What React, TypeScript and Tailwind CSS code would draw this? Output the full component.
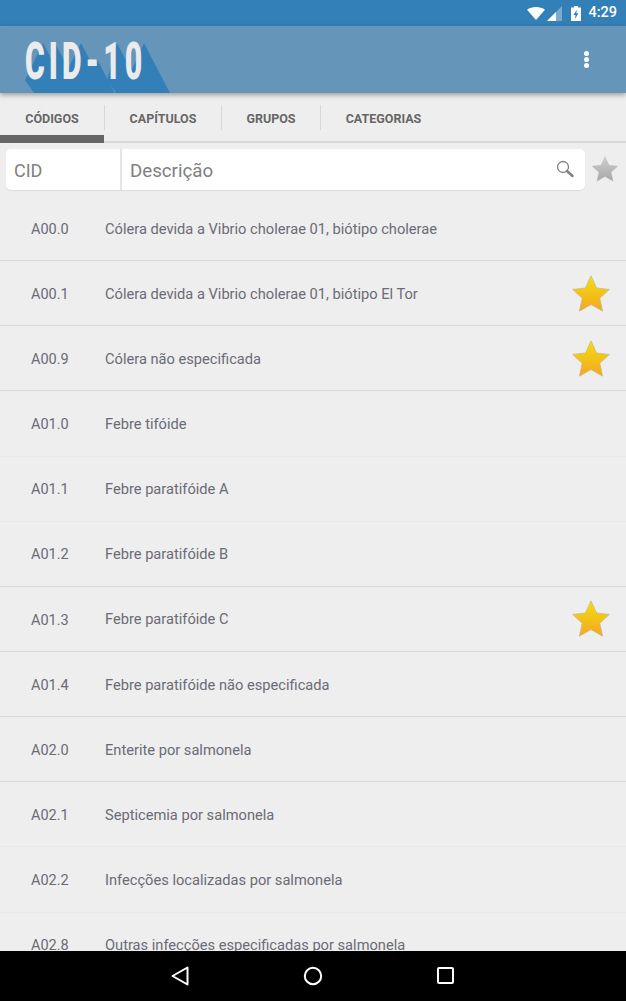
import { useId } from "react";

const rows = [
  { code: "A00.0", text: "Cólera devida a Vibrio cholerae 01, biótipo cholerae", line: "strong" },
  { code: "A00.1", text: "Cólera devida a Vibrio cholerae 01, biótipo El Tor", line: "strong", fav: true },
  { code: "A00.9", text: "Cólera não especificada", line: "strong", fav: true },
  { code: "A01.0", text: "Febre tifóide", line: "faint" },
  { code: "A01.1", text: "Febre paratifóide A", line: "faint" },
  { code: "A01.2", text: "Febre paratifóide B", line: "strong" },
  { code: "A01.3", text: "Febre paratifóide C", line: "strong", fav: true },
  { code: "A01.4", text: "Febre paratifóide não especificada", line: "strong" },
  { code: "A02.0", text: "Enterite por salmonela", line: "strong" },
  { code: "A02.1", text: "Septicemia por salmonela", line: "faint" },
  { code: "A02.2", text: "Infecções localizadas por salmonela", line: "faint" },
  { code: "A02.8", text: "Outras infecções especificadas por salmonela", line: "faint" },
];

const tabs = [
  { label: "CÓDIGOS", width: "w-[105px]", active: true },
  { label: "CAPÍTULOS", width: "w-[117px]" },
  { label: "GRUPOS", width: "w-[99px]" },
  { label: "CATEGORIAS", width: "w-[125px]", last: true },
];

// bounding boxes of the logo glyphs, used for the long shadow
const logoShadow = [
  [25, 43, 43, 80],
  [48, 43, 55, 80],
  [62, 43, 81, 80],
  [86, 59, 97, 63],
  [107, 43, 117, 80],
  [127, 43, 144, 80],
];

function Star({ from, to, stroke, className }: { from: string; to: string; stroke: string; className: string }) {
  const id = useId();
  return (
    <svg viewBox="0 0 38 37" className={className}>
      <defs>
        <linearGradient id={id} x1="0" y1="0" x2="0" y2="1">
          <stop offset="0.1" stopColor={from} />
          <stop offset="1" stopColor={to} />
        </linearGradient>
      </defs>
      <path
        d="M19 .8 24.6 13 37.4 14.4 27.8 23.2 30.6 36.2 19 29.6 7.4 36.2 10.2 23.2.6 14.4 13.4 13Z"
        fill={`url(#${id})`}
        stroke={stroke}
        strokeWidth="0.7"
        strokeLinejoin="round"
      />
    </svg>
  );
}

function StatusBar() {
  return (
    <div className="h-[26px] bg-[#3380b8] flex items-center justify-end text-white">
      <svg viewBox="0 0 18 13" className="w-[18px] h-[13px] mr-[2px]">
        <path d="M0 2.8C2.4.9 5.6 0 9 0s6.600.9 9 2.800L9 13Z" fill="#fff" />
      </svg>
      <svg viewBox="0 0 15 15" className="w-[15px] h-[15px] mr-[9px]">
        <path d="M15 0V15H0Z" fill="#fff" fillOpacity="0.35" />
        <path d="M9 6V15H0Z" fill="#fff" />
      </svg>
      <svg viewBox="0 0 10 15" className="w-[10px] h-[15px] mr-[7px]">
        <path
          d="M3 0H7V1.500H10V15H0V1.500H3ZM6 3.500 2.500 9H4.500L4 13 7.500 7.300H5.300Z"
          fill="#fff"
          fillRule="evenodd"
        />
      </svg>
      <span className="font-['Roboto',sans-serif] text-[14.500px] font-medium mr-[9px] leading-none">4:29</span>
    </div>
  );
}

function AppBar() {
  return (
    <div className="relative z-10 h-[67px] bg-[#6596ba] shadow-[0_2px_5px_rgba(0,0,0,0.35)] flex items-center justify-between overflow-hidden">
      <svg viewBox="0 0 200 67" className="absolute left-0 top-0 w-[200px] h-[67px]">
        {logoShadow.map(([x0, y0, x1, y1], i) => (
          <polygon
            key={i}
            fill="#3380b8"
            points={`${x0},${y1 - 26} ${x1},${y0 - 26} ${x1 + (93 - y0) * 0.52},67 ${x0 + (93 - y1) * 0.7},67`}
          />
        ))}
      </svg>
      <span className="relative ml-[25px] mt-[4px] font-['Roboto',sans-serif] font-black text-[52px] leading-none tracking-[7px] text-[#ebebeb] origin-left scale-x-[0.58]">
        CID-10
      </span>
      <div className="flex flex-col gap-[1px] mr-[37px]">
        <span className="w-[5px] h-[5px] rounded-full bg-white" />
        <span className="w-[5px] h-[5px] rounded-full bg-white" />
        <span className="w-[5px] h-[5px] rounded-full bg-white" />
      </div>
    </div>
  );
}

function Tabs() {
  return (
    <div className="h-[50px] flex border-b-2 border-[#d8d8d8] font-['Roboto',sans-serif]">
      {tabs.map((t) => (
        <div key={t.label} className={`${t.width} relative h-[50px] flex items-start`}>
          <div className={`w-full h-[25px] mt-[12px] pt-[3px] flex items-center justify-center text-[12.500px] font-bold text-[#666666] ${t.last ? "" : "border-r border-[#d8d8d8]"}`}>
            {t.label}
          </div>
          {t.active && <div className="absolute left-0 bottom-0 w-[104px] h-[8px] bg-[#666666]" />}
        </div>
      ))}
    </div>
  );
}

function SearchRow() {
  return (
    <div className="h-[53px] flex items-start pt-[6px] pl-[6px] font-['Roboto',sans-serif]">
      <div className="w-[579px] h-[41px] bg-white rounded-[5px] flex shadow-[0_1px_1px_rgba(0,0,0,0.08)]">
        <div className="w-[114px] flex items-center pl-[8px] pt-[1px] text-[18px] text-[#808080]">CID</div>
        <div className="w-[2px] bg-[#e4e4e4]" />
        <div className="flex-1 flex items-center pl-[8px] pt-[3px] text-[18.700px] text-[#808080]">Descrição</div>
        <svg viewBox="0 0 18 18" className="w-[18px] h-[18px] mt-[11px] mr-[11px]" fill="none">
          <circle cx="7" cy="7" r="5.500" stroke="#808080" strokeWidth="1.300" />
          <path d="M11 11 16.500 16" stroke="#808080" strokeWidth="2.400" strokeLinecap="round" />
        </svg>
      </div>
      <Star from="#cccccc" to="#a6a6a6" stroke="#b4b4b4" className="w-[26px] h-[26px] ml-[7px] mt-[7px]" />
    </div>
  );
}

function List() {
  return (
    <div className="flex-1 min-h-0 overflow-hidden font-['Roboto',sans-serif]">
      {rows.map((r) => (
        <div
          key={r.code}
          className={`h-[65.150px] flex items-center border-b ${r.line === "strong" ? "border-[#d9d9d9]" : "border-[#e8e8e8]"}`}
        >
          <span className="w-[105px] pl-[31px] pt-[3px] text-[14.500px] text-[#6b6b75]">{r.code}</span>
          <span className="flex-1 pt-[3px] text-[14.650px] text-[#6b6b75]">{r.text}</span>
          {r.fav && (
            <Star from="#f2d90f" to="#f5a623" stroke="#c4b88a" className="w-[38px] h-[37px] mr-[16px]" />
          )}
        </div>
      ))}
    </div>
  );
}

function NavBar() {
  return (
    <div className="h-[50px] bg-black flex items-center">
      <svg viewBox="0 0 18 20" className="w-[18px] h-[20px] ml-[171px]" fill="none">
        <path d="M16.500 1.500V18.500L1.500 10Z" stroke="#fff" strokeWidth="2" strokeLinejoin="round" />
      </svg>
      <svg viewBox="0 0 20 20" className="w-[20px] h-[20px] ml-[114px]" fill="none">
        <circle cx="10" cy="10" r="8.200" stroke="#fff" strokeWidth="2" />
      </svg>
      <svg viewBox="0 0 18 18" className="w-[18px] h-[18px] ml-[114px]" fill="none">
        <rect x="1" y="1" width="15" height="15" rx="1" stroke="#fff" strokeWidth="2" />
      </svg>
    </div>
  );
}

export default function App() {
  return (
    <div className="w-[626px] h-[1001px] flex flex-col bg-[#eeeeee] overflow-hidden">
      <StatusBar />
      <AppBar />
      <Tabs />
      <SearchRow />
      <List />
      <NavBar />
    </div>
  );
}
